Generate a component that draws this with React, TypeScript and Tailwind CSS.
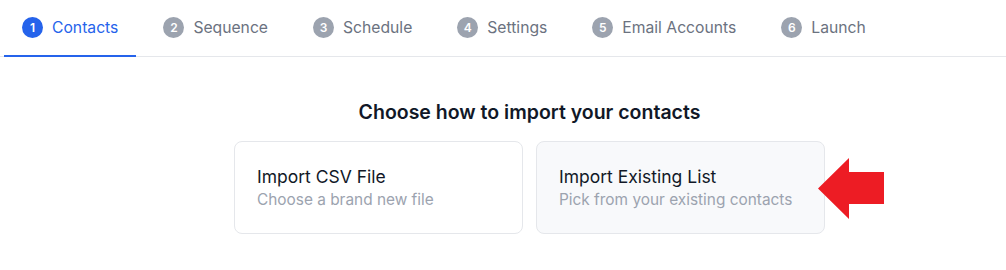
import React from "react";

const steps = ["Contacts", "Sequence", "Schedule", "Settings", "Email Accounts", "Launch"];

export default function App() {
  const active = 0;

  return (
    <div className="min-h-[270px] bg-white font-['Inter','Liberation_Sans',sans-serif]">
      {/* step tabs */}
      <div className="flex gap-[9px] pl-1 border-b border-gray-200">
        {steps.map((label, i) => (
          <div
            key={label}
            className={`flex items-center gap-[9px] h-[57px] -mb-px px-[18px] border-b-2 ${
              i === active ? "border-[#2563eb]" : "border-transparent"
            }`}
          >
            <span
              className={`flex items-center justify-center w-[21px] h-[21px] rounded-full text-[12px] font-semibold text-white ${
                i === active ? "bg-[#2563eb]" : "bg-[#9ca3af]"
              }`}
            >
              {i + 1}
            </span>
            <span
              className={`text-[15.7px] ${i === active ? "text-[#2563eb]" : "text-[#6b7280]"}`}
            >
              {label}
            </span>
          </div>
        ))}
      </div>

      <div className="flex flex-col items-center pl-[53px] pt-[41px]">
        <h2 className="text-[19.5px] leading-7 font-semibold text-[#111827]">
          Choose how to import your contacts
        </h2>

        <div className="flex gap-[13px] mt-[15px]">
          <div className="w-[289px] border border-gray-200 rounded-lg bg-white px-[22px] py-[23px]">
            <div className="text-[17.5px] leading-6 text-[#111827]">Import CSV File</div>
            <div className="text-[15.4px] leading-[21px] text-[#9ca3af]">Choose a brand new file</div>
          </div>

          <div className="relative w-[289px] border border-gray-200 rounded-lg bg-[#f8f9fb] px-[22px] py-[23px]">
            <div className="text-[17.5px] leading-6 text-[#111827]">Import Existing List</div>
            <div className="text-[15.4px] leading-[21px] text-[#9ca3af]">Pick from your existing contacts</div>

            <svg
              className="absolute left-[281px] top-[16px]"
              width="66"
              height="61"
              viewBox="0 0 66 61"
            >
              <polygon points="0,30.5 31,0 31,14 66,14 66,46 31,46 31,61" fill="#ed1c24" />
            </svg>
          </div>
        </div>
      </div>
    </div>
  );
}
